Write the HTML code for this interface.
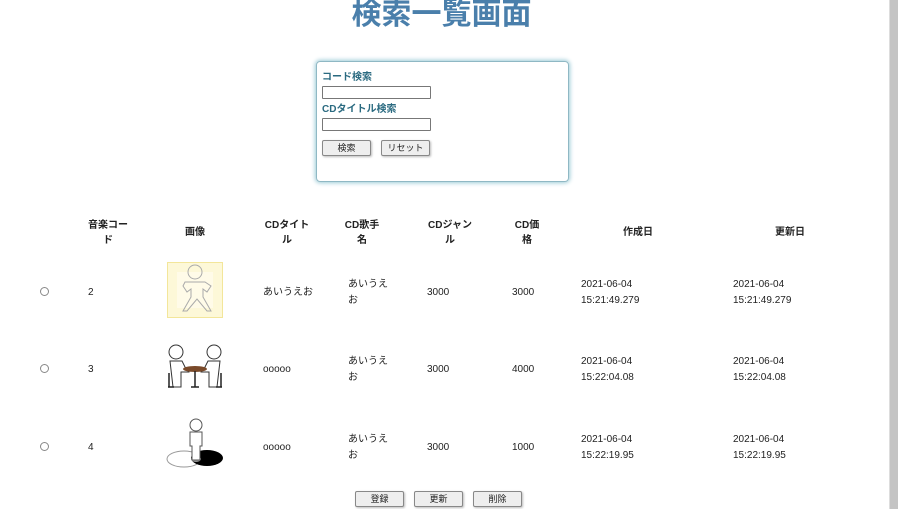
<!DOCTYPE html>
<html><head><meta charset="utf-8"><style>
*{margin:0;padding:0;box-sizing:border-box}
body{width:898px;height:509px;overflow:hidden;background:#fff;font-family:"Liberation Sans","Noto Sans CJK JP",sans-serif;position:relative;color:#222}
.a{position:absolute;white-space:nowrap}
h1{position:absolute;left:0;width:883px;text-align:center;top:-11px;font-size:30px;color:#4a7fab;font-weight:bold;font-family:"Noto Sans CJK JP",sans-serif}
.box{position:absolute;left:316px;top:61px;width:253px;height:121px;border:1px solid #8fb8c4;border-radius:4px;box-shadow:0 0 4px 1px #9ccad6}
.lbl{font-size:10px;font-weight:bold;color:#2a6a80}
.inp{position:absolute;width:109px;height:13px;border:1px solid #777;border-radius:1px;background:#fff}
.btn{position:absolute;height:16px;border:1px solid #888;border-radius:2px;background:#eee;box-shadow:1px 1px 2px #bbb;font-size:9px;text-align:center;line-height:14px;color:#222}
.th{position:absolute;font-size:10px;font-weight:bold;text-align:center;line-height:15px;transform:translateX(-50%)}
.td{position:absolute;font-size:10px;line-height:16px}
.rad{position:absolute;left:40px;width:9px;height:9px;border:1px solid #888;border-radius:50%}
.sb{position:absolute;left:889px;top:0;width:9px;height:509px;background:#c4c4c4;border-left:1px solid #ddd}
</style></head><body>
<h1>検索一覧画面</h1>
<div class="box"></div>
<div class="a lbl" style="left:322px;top:68px">コード検索</div>
<div class="inp" style="left:322px;top:86px"></div>
<div class="a lbl" style="left:322px;top:100px">CDタイトル検索</div>
<div class="inp" style="left:322px;top:118px"></div>
<div class="btn" style="left:322px;top:140px;width:49px">検索</div>
<div class="btn" style="left:381px;top:140px;width:49px">リセット</div>

<div class="th" style="left:108px;top:218px">音楽コー<br>ド</div>
<div class="th" style="left:195px;top:225px">画像</div>
<div class="th" style="left:287px;top:218px">CDタイト<br>ル</div>
<div class="th" style="left:362px;top:218px">CD歌手<br>名</div>
<div class="th" style="left:450px;top:218px">CDジャン<br>ル</div>
<div class="th" style="left:527px;top:218px">CD価<br>格</div>
<div class="th" style="left:638px;top:225px">作成日</div>
<div class="th" style="left:790px;top:225px">更新日</div>

<div class="rad" style="top:287px"></div>
<div class="td" style="left:88px;top:285px">2</div>
<svg class="a" style="left:167px;top:262px" width="56" height="56" viewBox="0 0 56 56"><rect x="0.5" y="0.5" width="55" height="55" fill="#fdf8d8" stroke="#f3e69a"/><rect x="10" y="10" width="36" height="36" fill="#fffbe8"/><g fill="none" stroke="#aaa" stroke-width="1"><circle cx="28" cy="10" r="7"/><path d="M18 20h20l6 4-4 6-4-3v8l8 14h-4l-10-12-10 12h-4l8-14v-8l-4 3-4-6z"/></g></svg>
<div class="td" style="left:263px;top:285px">あいうえお</div>
<div class="td" style="left:348px;top:277px">あいうえ<br>お</div>
<div class="td" style="left:427px;top:285px">3000</div>
<div class="td" style="left:512px;top:285px">3000</div>
<div class="td" style="left:581px;top:277px">2021-06-04<br>15:21:49.279</div>
<div class="td" style="left:733px;top:277px">2021-06-04<br>15:21:49.279</div>

<div class="rad" style="top:364px"></div>
<div class="td" style="left:88px;top:362px">3</div>
<svg class="a" style="left:167px;top:343px" width="56" height="46" viewBox="0 0 56 46"><g fill="#fff" stroke="#333" stroke-width="1"><circle cx="9" cy="9" r="7"/><circle cx="47" cy="9" r="7"/><path d="M3 18h12l4 8h3v3h-8v15h-8z"/><path d="M53 18h-12l-4 8h-3v3h8v15h8z"/></g><ellipse cx="28" cy="26" rx="12" ry="3" fill="#7a4a2a"/><path d="M28 28v16M24 44h8M2 30v14M54 30v14M1 44h6M49 44h6" stroke="#222" stroke-width="1.5"/></svg>
<div class="td" style="left:263px;top:362px">ooooo</div>
<div class="td" style="left:348px;top:354px">あいうえ<br>お</div>
<div class="td" style="left:427px;top:362px">3000</div>
<div class="td" style="left:512px;top:362px">4000</div>
<div class="td" style="left:581px;top:354px">2021-06-04<br>15:22:04.08</div>
<div class="td" style="left:733px;top:354px">2021-06-04<br>15:22:04.08</div>

<div class="rad" style="top:442px"></div>
<div class="td" style="left:88px;top:440px">4</div>
<svg class="a" style="left:166px;top:418px" width="58" height="50" viewBox="0 0 58 50"><ellipse cx="18" cy="41" rx="17" ry="8" fill="#fff" stroke="#999"/><ellipse cx="41" cy="40" rx="16" ry="8" fill="#000"/><ellipse cx="30" cy="41" rx="5" ry="3" fill="#999"/><g fill="#fff" stroke="#555"><circle cx="30" cy="7" r="6"/><path d="M24 14h12v14h-2v14h-8v-14h-2z"/></g></svg>
<div class="td" style="left:263px;top:440px">ooooo</div>
<div class="td" style="left:348px;top:432px">あいうえ<br>お</div>
<div class="td" style="left:427px;top:440px">3000</div>
<div class="td" style="left:512px;top:440px">1000</div>
<div class="td" style="left:581px;top:432px">2021-06-04<br>15:22:19.95</div>
<div class="td" style="left:733px;top:432px">2021-06-04<br>15:22:19.95</div>

<div class="btn" style="left:355px;top:491px;width:49px">登録</div>
<div class="btn" style="left:414px;top:491px;width:49px">更新</div>
<div class="btn" style="left:473px;top:491px;width:49px">削除</div>
<div class="sb"></div>
</body></html>
